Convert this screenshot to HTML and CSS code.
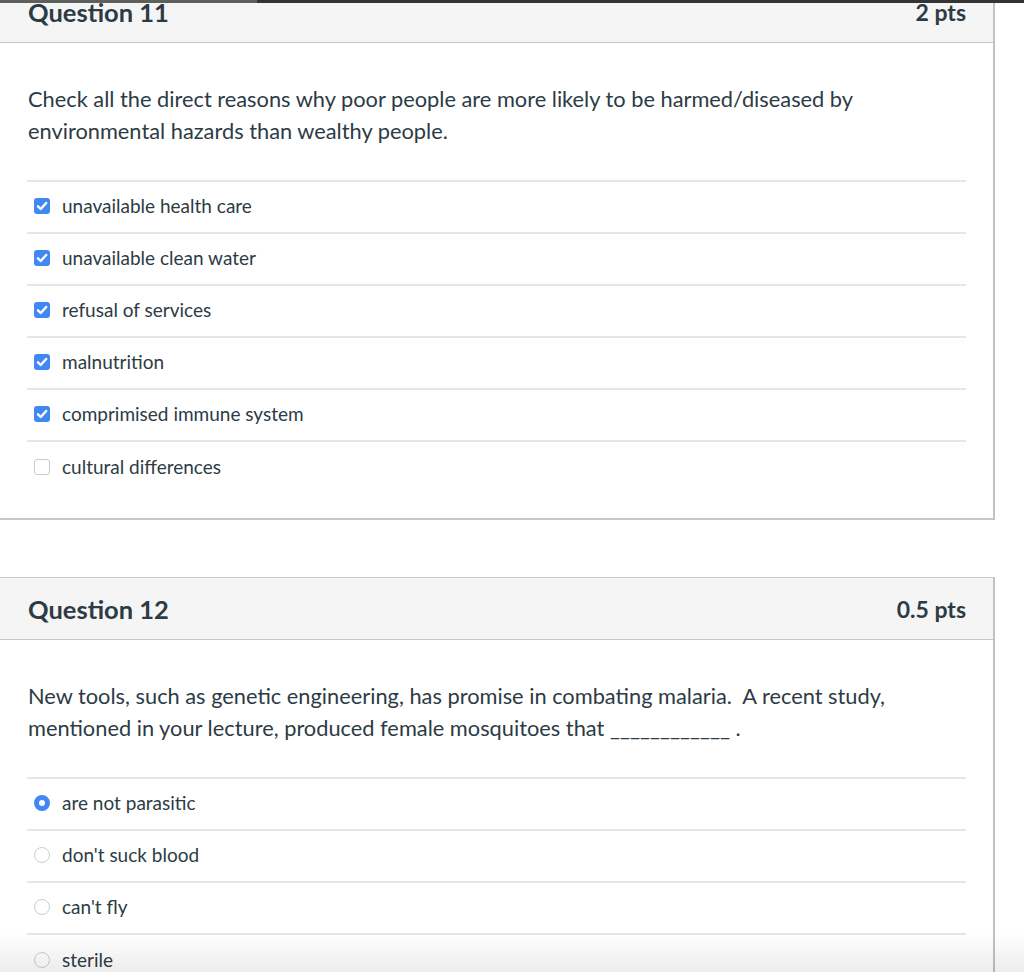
FILE: index.html
```html
<!DOCTYPE html>
<html>
<head>
<meta charset="utf-8">
<link rel="stylesheet" href="styles.css">
</head>
<body>
<div class="topbar"><div class="topbar-left"></div><div class="topbar-right"></div></div>
<div class="page">
  <div class="question q11">
    <div class="q-header">
      <span class="q-title">Question 11</span>
      <span class="q-pts">2 pts</span>
    </div>
    <div class="q-body">
      <p class="q-text">Check all the direct reasons why poor people are more likely to be harmed/diseased by environmental hazards than wealthy people.</p>
      <div class="answers">
        <div class="answer"><span class="cb checked"><svg viewBox="0 0 16 16" width="16" height="16"><path d="M4 8.3l2.7 2.7L12.2 5" fill="none" stroke="#fff" stroke-width="2.4" stroke-linecap="round" stroke-linejoin="round"/></svg></span><span class="label">unavailable health care</span></div>
        <div class="answer"><span class="cb checked"><svg viewBox="0 0 16 16" width="16" height="16"><path d="M4 8.3l2.7 2.7L12.2 5" fill="none" stroke="#fff" stroke-width="2.4" stroke-linecap="round" stroke-linejoin="round"/></svg></span><span class="label">unavailable clean water</span></div>
        <div class="answer"><span class="cb checked"><svg viewBox="0 0 16 16" width="16" height="16"><path d="M4 8.3l2.7 2.7L12.2 5" fill="none" stroke="#fff" stroke-width="2.4" stroke-linecap="round" stroke-linejoin="round"/></svg></span><span class="label">refusal of services</span></div>
        <div class="answer"><span class="cb checked"><svg viewBox="0 0 16 16" width="16" height="16"><path d="M4 8.3l2.7 2.7L12.2 5" fill="none" stroke="#fff" stroke-width="2.4" stroke-linecap="round" stroke-linejoin="round"/></svg></span><span class="label">malnutrition</span></div>
        <div class="answer"><span class="cb checked"><svg viewBox="0 0 16 16" width="16" height="16"><path d="M4 8.3l2.7 2.7L12.2 5" fill="none" stroke="#fff" stroke-width="2.4" stroke-linecap="round" stroke-linejoin="round"/></svg></span><span class="label">comprimised immune system</span></div>
        <div class="answer"><span class="cb"></span><span class="label">cultural differences</span></div>
      </div>
    </div>
  </div>

  <div class="question q12">
    <div class="q-header">
      <span class="q-title">Question 12</span>
      <span class="q-pts">0.5 pts</span>
    </div>
    <div class="q-body">
      <p class="q-text">New tools, such as genetic engineering, has promise in combating malaria.&nbsp; A recent study, mentioned in your lecture, produced female mosquitoes that ____________ .</p>
      <div class="answers">
        <div class="answer"><span class="radio selected"></span><span class="label">are not parasitic</span></div>
        <div class="answer"><span class="radio"></span><span class="label">don't suck blood</span></div>
        <div class="answer"><span class="radio"></span><span class="label">can't fly</span></div>
        <div class="answer"><span class="radio"></span><span class="label">sterile</span></div>
      </div>
    </div>
  </div>
</div>
<div class="bottom-fade"></div>
</body>
</html>
```

FILE: styles.css
```css
html, body {
  margin: 0;
  padding: 0;
  background: #fff;
  height: 972px;
  overflow: hidden;
}
body {
  font-family: Lato, "Open Sans", sans-serif;
  color: #2d3b45;
  position: relative;
}
.topbar {
  position: absolute;
  top: 0;
  left: 0;
  right: 0;
  height: 3px;
  display: flex;
  z-index: 5;
}
.topbar-left {
  width: 257px;
  background: #5e605e;
}
.topbar-right {
  flex: 1;
  background: #343434;
}
.page {
  margin-top: -20px;
  margin-left: -1px;
  width: 996px;
}
.question {
  border: 1px solid #c4c8cb;
  border-right: 2px solid #c0c2c4;
  border-bottom-width: 2px;
  background: #fff;
}
.q12 {
  margin-top: 57px;
}
.q-header {
  height: 62px;
  background: #f5f5f5;
  border-bottom: 1px solid #c4c8cb;
  display: flex;
  align-items: center;
  justify-content: space-between;
  padding: 0 27px 0 28px;
  box-sizing: border-box;
}
.q-title {
  font-size: 25.5px;
  font-weight: 700;
}
.q-pts {
  font-size: 23px;
  font-weight: 700;
}
.q-body {
  padding: 40px 27px 24px 27px;
}
.q-text {
  margin: 0 0 33px 1px;
  font-size: 21.8px;
  line-height: 32px;
}
.answers {
  border-top: 2px solid #e6e6e6;
}
.answer {
  height: 52px;
  box-sizing: border-box;
  padding-bottom: 4px;
  display: flex;
  align-items: center;
  padding-left: 7px;
  border-bottom: 2px solid #e6e6e6;
  font-size: 19px;
}
.answer:last-child {
  border-bottom: none;
}
.cb, .radio {
  width: 16px;
  height: 16px;
  box-sizing: border-box;
  flex: none;
  margin-right: 12px;
  margin-top: 2px;
  display: flex;
}
.cb {
  border: 1px solid #c9cdd1;
  border-radius: 3px;
  background: #fff;
}
.cb.checked {
  border: none;
  background: #4387f5;
}
.radio {
  border: 1px solid #c9cdd1;
  border-radius: 50%;
  background: #fff;
}
.radio.selected {
  border: 5px solid #4387f5;
}
.bottom-fade {
  position: absolute;
  left: 0;
  right: 0;
  bottom: 0;
  height: 40px;
  background: linear-gradient(to bottom, rgba(0,0,0,0), rgba(0,0,0,0.075));
  pointer-events: none;
}
```
